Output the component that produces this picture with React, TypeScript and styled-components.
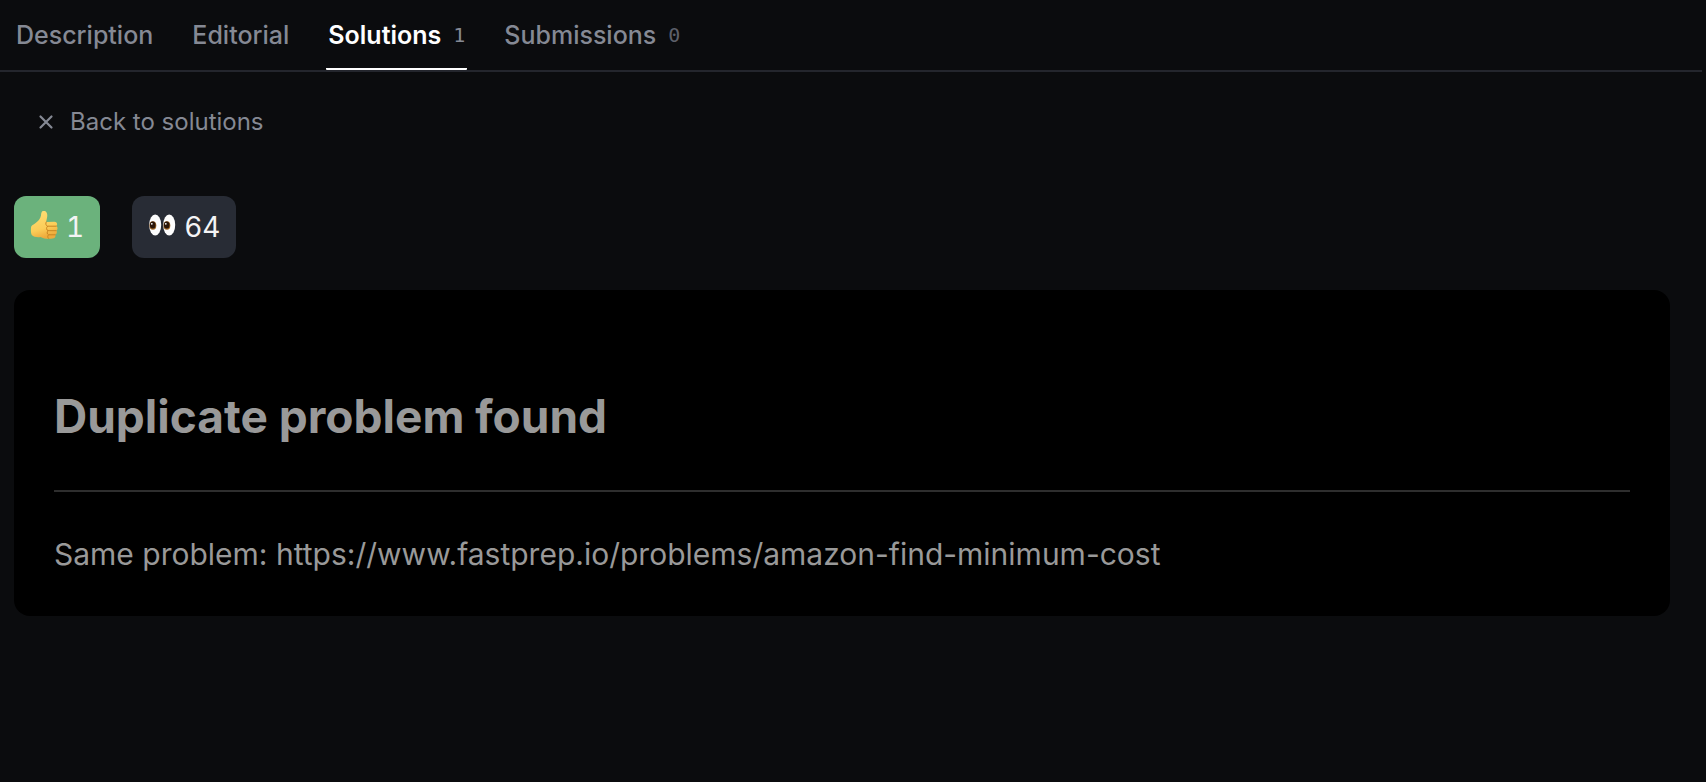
import React from "react";
import styled, { createGlobalStyle } from "styled-components";

const Global = createGlobalStyle`
  * { box-sizing: border-box; }
  body { margin: 0; background: #0b0c0e; font-family: Inter, "Liberation Sans", sans-serif; }
  button { cursor: pointer; }
`;

const Tabs = styled.nav`
  display: flex;
  gap: 35px;
  margin-right: 4px;
  padding: 0 14px;
  border-bottom: 2px solid #24262d;
`;

const Tab = styled.button<{ $active?: boolean }>`
  display: flex;
  align-items: center;
  gap: 12px;
  padding: 19px 2px 17px;
  background: none;
  border: 0;
  border-bottom: 2px solid ${p => (p.$active ? "#ffffff" : "transparent")};
  border-radius: 1px;
  color: ${p => (p.$active ? "#ffffff" : "#858994")};
  font: ${p => (p.$active ? 600 : 500)} 25px/32px Inter, sans-serif;
`;

const Count = styled.span<{ $dim?: boolean }>`
  color: ${p => (p.$dim ? "#5d606a" : "#858994")};
  font: 400 20px/32px "DejaVu Sans Mono", monospace;
`;

const Back = styled.button`
  display: flex;
  align-items: center;
  gap: 16px;
  margin: 32px 0 0 38px;
  padding: 0;
  background: none;
  border: 0;
  color: #858994;
  font: 400 24px/36px Inter, sans-serif;
`;

const Reactions = styled.div`
  display: flex;
  gap: 32px;
  margin: 56px 14px 32px;
`;

const Reaction = styled.button<{ $on?: boolean }>`
  display: flex;
  align-items: center;
  gap: 8px;
  height: 62px;
  padding: 0 16px;
  border: 0;
  border-radius: 12px;
  color: #f4f4f5;
  background: ${p => (p.$on ? "#6bb27c" : "#282c35")};
  font: 400 28px/40px Inter, sans-serif;
  font-variant-numeric: tabular-nums;
`;

const Card = styled.article`
  margin: 0 36px 32px 14px;
  padding: 96px 40px 32px;
  border-radius: 16px;
  background: #000;
  color: #999;
`;

const Title = styled.h1`
  margin: 0 0 32px;
  padding-bottom: 44px;
  border-bottom: 2px solid #2e2e2e;
  font: 700 46px/60px Inter, sans-serif;
`;

const Body = styled.p`
  margin: 0;
  font: 400 30px/60px Inter, sans-serif;
`;

const CloseIcon = () => (
  <svg width="16" height="16" viewBox="0 0 16 16" fill="none" stroke="currentColor" strokeWidth="2.200" strokeLinecap="round" aria-hidden="true">
    <path d="M2.500 2.500 13.500 13.500M13.500 2.500 2.500 13.500" />
  </svg>
);

const ThumbIcon = () => (
  <svg width="28" height="32" viewBox="0 2 28 32" aria-hidden="true">
    <defs>
      <linearGradient id="skin" x1="0" y1="0" x2="0.3" y2="1">
        <stop offset="0" stopColor="#ffdf78" />
        <stop offset="0.7" stopColor="#fbcd58" />
        <stop offset="1" stopColor="#eeab3c" />
      </linearGradient>
    </defs>
    <path
      fill="url(#skin)"
      d="M1 18.500C1 16.500 3 16 5 14.500C8 12.500 10.500 9.500 11 6.500C11.200 4 11.500 2 13.500 1.800C16.500 1.600 17.600 4.500 17.200 7.500C17 9.500 16.300 11.500 16.200 13L24.500 12.700C27 12.700 28 15.600 26.300 17C28 18 27.800 20.800 26.200 21.600C27.500 22.800 26.800 25.200 25.300 25.700C26 27.500 24.800 29.500 22.500 29.600C18.500 30.200 13.500 29.800 10.500 28C7.500 28.500 3.500 28 1.800 26C.8 24.500.8 21 1 18.500Z"
    />
    <path
      fill="none"
      stroke="#c98522"
      strokeWidth="1"
      strokeLinecap="round"
      d="M16.200 13C15.300 14.500 15.800 16.500 17.500 17.200H26.200M17.500 17.200C16 18.500 16.300 21 18 21.700H26M18 21.700C16.500 23 17 25.200 18.600 25.800H25.200M18.600 25.800C17.300 26.800 17.500 28.600 18.600 29.500"
    />
  </svg>
);

const Eye = ({ x }: { x: number }) => (
  <g transform={`translate(${x} 0)`}>
    <ellipse cx="6.200" cy="12" rx="6" ry="10.500" fill="#fdfdfd" />
    <ellipse cx="3.900" cy="12.500" rx="3.400" ry="4.300" fill="#9a6324" />
    <ellipse cx="3.700" cy="12" rx="2.800" ry="3.600" fill="#2b1608" />
    <circle cx="2.800" cy="10.800" r=".9" fill="#fff" />
  </g>
);

const EyesIcon = () => (
  <svg width="28" height="28" viewBox="0 0 28 28" aria-hidden="true">
    <Eye x={1} />
    <Eye x={15} />
  </svg>
);

export default function App() {
  return (
    <>
      <Global />
      <Tabs>
        <Tab>Description</Tab>
        <Tab>Editorial</Tab>
        <Tab $active>Solutions <Count>1</Count></Tab>
        <Tab>Submissions <Count $dim>0</Count></Tab>
      </Tabs>
      <Back><CloseIcon />Back to solutions</Back>
      <Reactions>
        <Reaction $on><ThumbIcon />1</Reaction>
        <Reaction><EyesIcon />64</Reaction>
      </Reactions>
      <Card>
        <Title>Duplicate problem found</Title>
        <Body>Same problem: https://www.fastprep.io/problems/amazon-find-minimum-cost</Body>
      </Card>
    </>
  );
}
